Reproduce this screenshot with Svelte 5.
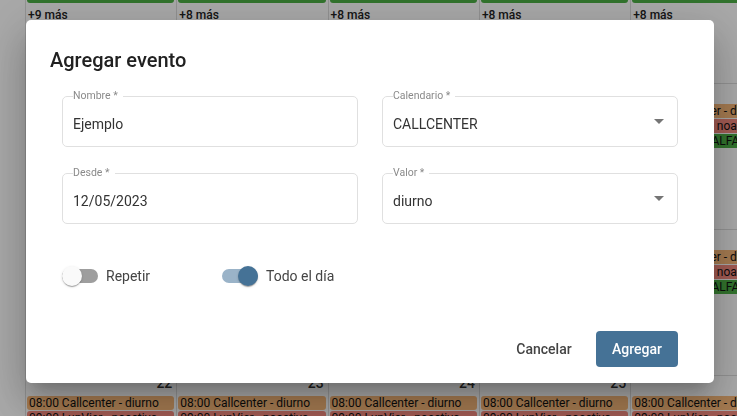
<script>
  const cols = [0, 1, 2, 3, 4];
  const rows = [
    { nums: ['', '', '', '', ''], top: true, more: ['+9 más', '+8 más', '+8 más', '+8 más', '+8 más'] },
    { nums: ['8', '9', '10', '11', '12'], ev: true },
    { nums: ['15', '16', '17', '18', '19'], ev: true },
    { nums: ['22', '23', '24', '25', '26'], ev: true }
  ];
</script>

<div class="calendar">
  {#each rows as row}
    <div class="week">
      {#each cols as c}
        <div class="day">
          {#if row.top}
            <div class="ev green top"></div>
            <div class="more">{row.more[c]}</div>
          {:else}
            <div class="num">{row.nums[c]}</div>
            <div class="ev orange">08:00 Callcenter - diurno</div>
            <div class="ev red">09:00 LunVier - noactivo</div>
            <div class="ev green">08:00 Guardia ALFA</div>
          {/if}
        </div>
      {/each}
    </div>
  {/each}
</div>

<div class="backdrop">
  <div class="modal">
    <h2>Agregar evento</h2>
    <div class="fields">
      <fieldset>
        <legend>Nombre *</legend>
        <span class="value">Ejemplo</span>
      </fieldset>
      <fieldset>
        <legend>Calendario *</legend>
        <span class="value">CALLCENTER</span>
        <i class="arrow"></i>
      </fieldset>
      <fieldset>
        <legend>Desde *</legend>
        <span class="value">12/05/2023</span>
      </fieldset>
      <fieldset>
        <legend>Valor *</legend>
        <span class="value">diurno</span>
        <i class="arrow"></i>
      </fieldset>
    </div>
    <div class="switches">
      <div class="switch off"><span class="track"><span class="thumb"></span></span>Repetir</div>
      <div class="switch on"><span class="track"><span class="thumb"></span></span>Todo el día</div>
    </div>
    <div class="actions">
      <button class="cancel">Cancelar</button>
      <button class="add">Agregar</button>
    </div>
  </div>
</div>

<style>
  :global(body) {
    margin: 0;
    overflow: hidden;
    font-family: Roboto, "Liberation Sans", sans-serif;
    background: #fff;
  }
  .calendar {
    height: 416px;
    overflow: hidden;
    box-sizing: border-box;
    padding-left: 25px;
  }
  .week {
    display: flex;
    width: 800px;
    height: 146px;
    box-sizing: border-box;
    border-bottom: 1px solid #ddd;
  }
  .week:first-child {
    height: 84px;
  }
  .day {
    flex: 0 0 151.3px;
    min-width: 0;
    box-sizing: border-box;
    border-left: 1px solid #ddd;
    padding: 0 2px 0 1px;
    color: #111;
  }
  .num {
    height: 20px;
    line-height: 15px;
    text-align: right;
    font-size: 14px;
    padding-right: 2px;
    font-weight: 500;
    box-sizing: border-box;
    color: #333;
  }
  .ev {
    height: 14px;
    line-height: 14px;
    margin-bottom: 1px;
    padding-left: 2px;
    border-radius: 3px;
    white-space: nowrap;
    overflow: hidden;
    font-size: 12px;
    color: #111;
  }
  .top { height: 3px; border-radius: 0 0 3px 3px; margin-bottom: 4px; }
  .orange { background: #f9b97a; }
  .red { background: #f58a7f; }
  .green { background: #4caf45; }
  .more { font-size: 12px; font-weight: 500; line-height: 16px; color: #222; padding-left: 1px; }
  .backdrop {
    position: fixed;
    inset: 0;
    background: rgba(0, 0, 0, 0.34);
  }
  .modal {
    position: absolute;
    left: 26px;
    top: 20px;
    width: 688px;
    height: 363px;
    box-sizing: border-box;
    background: #fff;
    border-radius: 5px;
    padding: 26px 36px 16px 24px;
    display: flex;
    flex-direction: column;
    box-shadow: 0 11px 15px -7px rgba(0,0,0,.2), 0 24px 38px 3px rgba(0,0,0,.14), 0 9px 46px 8px rgba(0,0,0,.12);
  }
  h2 {
    margin: 0 0 17px;
    font-size: 20px;
    font-weight: 500;
    line-height: 28px;
    color: #212121;
  }
  .fields {
    display: grid;
    grid-template-columns: 296px 296px;
    gap: 21px 24px;
    margin-left: 12px;
  }
  fieldset {
    position: relative;
    margin: 0;
    padding: 0 0 0 10px;
    height: 56px;
    box-sizing: border-box;
    border: 1px solid #e0e0e0;
    border-radius: 5px;
    min-width: 0;
  }
  legend {
    font-size: 10.5px;
    line-height: 10px;
    height: 10px;
    color: #8a8a8a;
    padding: 0 5px 0 0;
  }
  .value {
    display: block;
    font-size: 14px;
    line-height: 20px;
    color: #333;
    margin-top: 13px;
  }
  .arrow {
    position: absolute;
    right: 13px;
    top: 18px;
    width: 0;
    height: 0;
    border-left: 5px solid transparent;
    border-right: 5px solid transparent;
    border-top: 5px solid #757575;
  }
  .switches {
    display: flex;
    margin: 42px 0 0 12px;
  }
  .switch {
    width: 160px;
    display: flex;
    align-items: center;
    gap: 8px;
    font-size: 14px;
    line-height: 20px;
    color: #444;
  }
  .track {
    position: relative;
    display: block;
    width: 36px;
    height: 14px;
    border-radius: 7px;
    background: #9e9e9e;
  }
  .on .track { background: #9ab3c8; }
  .thumb {
    position: absolute;
    top: -3px;
    left: 0;
    width: 20px;
    height: 20px;
    border-radius: 50%;
    background: #fafafa;
    box-shadow: 0 2px 1px -1px rgba(0,0,0,.2), 0 1px 1px 0 rgba(0,0,0,.14), 0 1px 3px 0 rgba(0,0,0,.12);
  }
  .on .thumb { left: 16px; background: #457296; }
  .actions {
    margin-top: auto;
    display: flex;
    justify-content: flex-end;
    align-items: center;
    gap: 8px;
  }
  button {
    font-family: inherit;
    font-size: 14px;
    font-weight: 500;
    border: 0;
    height: 36px;
    border-radius: 4px;
    background: transparent;
    padding: 0;
  }
  .cancel { color: #444; width: 88px; }
  .add { background: #457296; color: #fff; width: 82px; }
</style>
